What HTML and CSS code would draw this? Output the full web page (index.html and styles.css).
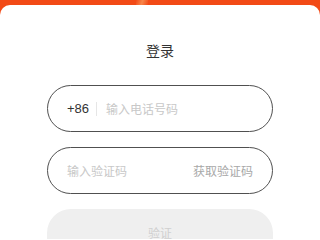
FILE: index.html
```html
<!DOCTYPE html>
<html lang="zh-CN">
<head>
    <meta charset="UTF-8">
    <meta name="viewport" content="width=device-width, initial-scale=1.0">
    <title>登录</title>
    <link rel="stylesheet" href="styles.css">
</head>
<body>
    <div class="header"><span class="streak"></span></div>
    <div class="card">
        <h3 class="title">登录</h3>
        <div class="field">
            <span class="code">+86</span>
            <span class="divider"></span>
            <span class="placeholder">输入电话号码</span>
        </div>
        <div class="field">
            <span class="placeholder">输入验证码</span>
            <span class="get-code">获取验证码</span>
        </div>
        <button class="submit">验证</button>
    </div>
</body>
</html>
```

FILE: styles.css
```css
body {
    margin: 0;
    font-family: "Liberation Sans", "Noto Sans CJK SC", sans-serif;
    background-color: #f24a16;
    height: 240px;
    overflow: hidden;
}

.header {
    height: 5px;
    position: relative;
    background-color: #f24a16;
}

.streak {
    position: absolute;
    left: 136px;
    top: 0;
    width: 12px;
    height: 5px;
    background: linear-gradient(110deg, transparent, #f7864a, transparent);
}

.card {
    background-color: #fff;
    border-radius: 10px 10px 0 0;
    height: 235px;
    padding: 38px 47px 0;
    box-sizing: border-box;
    overflow: hidden;
}

.title {
    margin: 0 0 26px;
    text-align: center;
    font-size: 14px;
    font-weight: normal;
    color: #333;
    line-height: 16px;
}

.field {
    height: 47px;
    border: 1.5px solid #505050;
    border-radius: 24px;
    box-sizing: border-box;
    display: flex;
    align-items: center;
    padding: 0 19px;
    margin-bottom: 15px;
}

.code {
    font-size: 13px;
    color: #333;
}

.divider {
    width: 1px;
    height: 14px;
    background-color: #e6e6e6;
    margin: 0 9px 0 7px;
}

.placeholder {
    font-size: 12px;
    color: #c8c8c8;
}

.get-code {
    margin-left: auto;
    font-size: 12px;
    color: #a8a8a8;
}

.submit {
    display: block;
    width: 100%;
    height: 30px;
    border: none;
    border-radius: 24px 24px 0 0;
    background-color: #efefef;
    color: #d0d0d0;
    font-family: inherit;
    font-size: 12px;
    line-height: 14px;
    padding: 18px 0 0;
    margin-top: 15px;
}
```
